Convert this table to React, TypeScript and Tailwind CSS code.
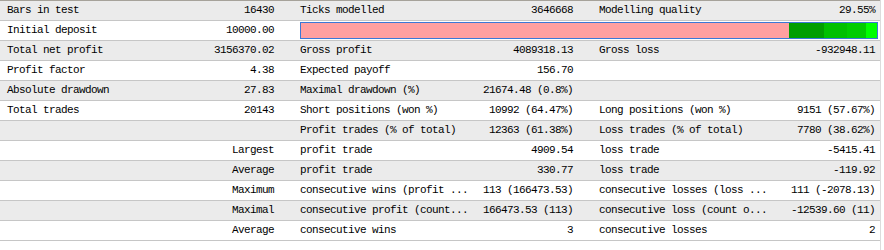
import React from 'react';

type Cell = { label?: string; value?: string; right?: boolean };
type Row = { c1: Cell; c2?: Cell; c3?: Cell; bar?: boolean };

const rows: Row[] = [
  { c1: { label: 'Bars in test', value: '16430' }, c2: { label: 'Ticks modelled', value: '3646668' }, c3: { label: 'Modelling quality', value: '29.55%' } },
  { c1: { label: 'Initial deposit', value: '10000.00' }, bar: true },
  { c1: { label: 'Total net profit', value: '3156370.02' }, c2: { label: 'Gross profit', value: '4089318.13' }, c3: { label: 'Gross loss', value: '-932948.11' } },
  { c1: { label: 'Profit factor', value: '4.38' }, c2: { label: 'Expected payoff', value: '156.70' }, c3: {} },
  { c1: { label: 'Absolute drawdown', value: '27.83' }, c2: { label: 'Maximal drawdown (%)', value: '21674.48 (0.8%)' }, c3: {} },
  { c1: { label: 'Total trades', value: '20143' }, c2: { label: 'Short positions (won %)', value: '10992 (64.47%)' }, c3: { label: 'Long positions (won %)', value: '9151 (57.67%)' } },
  { c1: {}, c2: { label: 'Profit trades (% of total)', value: '12363 (61.38%)' }, c3: { label: 'Loss trades (% of total)', value: '7780 (38.62%)' } },
  { c1: { value: 'Largest' }, c2: { label: 'profit trade', value: '4909.54' }, c3: { label: 'loss trade', value: '-5415.41' } },
  { c1: { value: 'Average' }, c2: { label: 'profit trade', value: '330.77' }, c3: { label: 'loss trade', value: '-119.92' } },
  { c1: { value: 'Maximum' }, c2: { label: 'consecutive wins (profit ...', value: '113 (166473.53)' }, c3: { label: 'consecutive losses (loss ...', value: '111 (-2078.13)' } },
  { c1: { value: 'Maximal' }, c2: { label: 'consecutive profit (count...', value: '166473.53 (113)' }, c3: { label: 'consecutive loss (count o...', value: '-12539.60 (11)' } },
  { c1: { value: 'Average' }, c2: { label: 'consecutive wins', value: '3' }, c3: { label: 'consecutive losses', value: '2' } },
];

const Pair: React.FC<{ cell?: Cell; className: string }> = ({ cell, className }) => (
  <div className={`flex items-center justify-between whitespace-pre ${className}`}>
    <span>{cell?.label ?? ''}</span>
    <span>{cell?.value ?? ''}</span>
  </div>
);

const QualityBar = () => (
  <div className="flex-1 flex items-center pl-[7px] pr-[2px]">
    <div className="h-[17px] w-full border border-[#3b78d6] flex">
      <div className="flex-1 bg-[#ffa0a0]" />
      <div className="w-[35px] bg-[#009e00]" />
      <div className="w-[23px] bg-[#00c000]" />
      <div className="w-[19px] bg-[#00cc00]" />
      <div className="w-[11px] bg-[#00ff00]" />
    </div>
  </div>
);

export default function App() {
  return (
    <div
      className="w-[884px] h-[250px] bg-white flex text-black text-[11px] tracking-[-0.6px] leading-none"
      style={{ fontFamily: '"Liberation Mono", "DejaVu Sans Mono", monospace' }}
    >
      <div className="w-[880px] border-t border-[#a6a29a]">
        {rows.map((r, i) => (
          <div
            key={i}
            className={`h-[20px] flex border-b border-[#c6c6c6] ${i % 2 === 0 ? 'bg-[#ebebeb]' : 'bg-white'}`}
          >
            <Pair cell={r.c1} className="w-[293px] pl-[7px] pr-[19px]" />
            {r.bar ? (
              <QualityBar />
            ) : (
              <>
                <Pair cell={r.c2} className="w-[299px] pl-[7px] pr-[19px]" />
                <Pair cell={r.c3} className="flex-1 pl-[7px] pr-[5px]" />
              </>
            )}
          </div>
        ))}
      </div>
      <div className="w-[4px] border-l border-[#dcdcdc] bg-white" />
    </div>
  );
}
